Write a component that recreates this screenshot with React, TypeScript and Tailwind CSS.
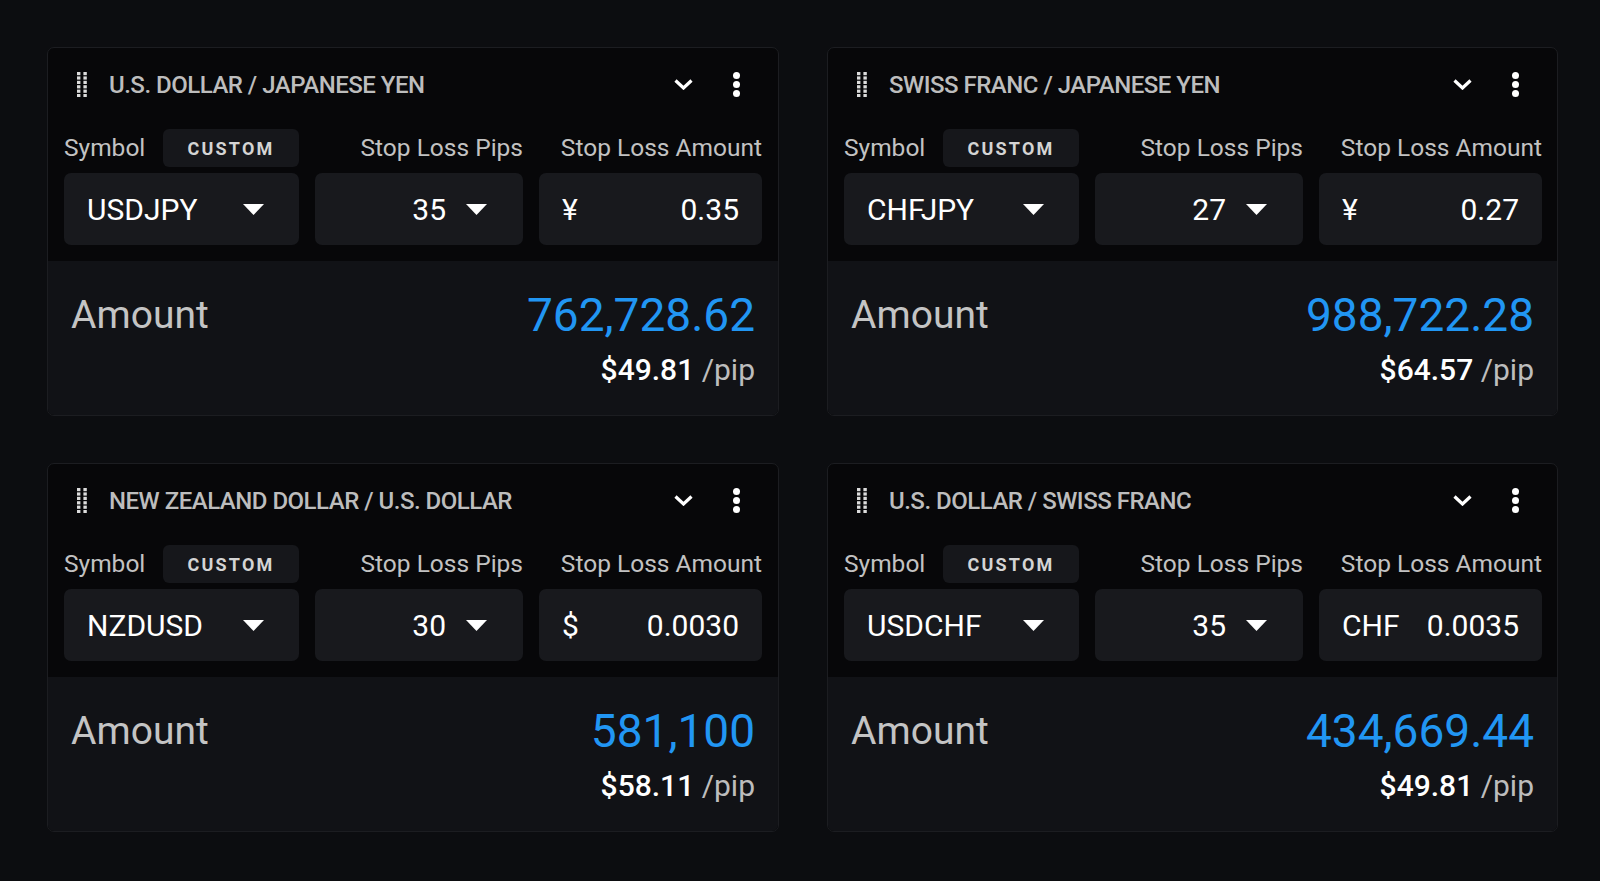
type Pair = {
  title: string;
  symbol: string;
  pips: string;
  currency: string;
  stopAmount: string;
  amount: string;
  perPip: string;
};

const PAIRS: Pair[] = [
  { title: 'U.S. DOLLAR / JAPANESE YEN', symbol: 'USDJPY', pips: '35', currency: '¥', stopAmount: '0.35', amount: '762,728.62', perPip: '$49.81' },
  { title: 'SWISS FRANC / JAPANESE YEN', symbol: 'CHFJPY', pips: '27', currency: '¥', stopAmount: '0.27', amount: '988,722.28', perPip: '$64.57' },
  { title: 'NEW ZEALAND DOLLAR / U.S. DOLLAR', symbol: 'NZDUSD', pips: '30', currency: '$', stopAmount: '0.0030', amount: '581,100', perPip: '$58.11' },
  { title: 'U.S. DOLLAR / SWISS FRANC', symbol: 'USDCHF', pips: '35', currency: 'CHF', stopAmount: '0.0035', amount: '434,669.44', perPip: '$49.81' },
];

function DragHandle() {
  const rows = [0, 1, 2, 3, 4, 5];
  return (
    <svg width="10" height="25" viewBox="0 0 10 25" className="shrink-0">
      {rows.map((r) => (
        <g key={r} fill="#dcdcdc">
          <rect x="0" y={r * 4.4} width="3.4" height="3.2" />
          <rect x="6.4" y={r * 4.4} width="3.4" height="3.2" />
        </g>
      ))}
    </svg>
  );
}

function Caret() {
  return (
    <svg width="21" height="11" viewBox="0 0 21 11" className="shrink-0">
      <polygon points="0,0 21,0 10.5,11" fill="#ffffff" />
    </svg>
  );
}

function Card({ p }: { p: Pair }) {
  return (
    <div className="h-[369px] flex flex-col rounded-[7px] border border-[#1c1d21] bg-[#070709] overflow-hidden">
      <div className="h-[73px] shrink-0 flex items-center pl-[29px] pr-[38px]">
        <DragHandle />
        <span className="ml-[22px] flex-1 text-[24px] font-medium tracking-[-0.5px] text-[#bdbdbd] leading-none">
          {p.title}
        </span>
        <svg width="19" height="11" viewBox="0 0 19 11" className="shrink-0">
          <polyline points="1.5,1.5 9.5,9 17.5,1.5" fill="none" stroke="#ffffff" strokeWidth="3.2" />
        </svg>
        <div className="ml-[40px] flex flex-col gap-[2px]">
          <span className="w-[7px] h-[7px] rounded-full bg-white" />
          <span className="w-[7px] h-[7px] rounded-full bg-white" />
          <span className="w-[7px] h-[7px] rounded-full bg-white" />
        </div>
      </div>

      <div className="px-[16px] pt-[8px] pb-[16px] grid grid-cols-[235px_208px_223px] gap-x-[16px] gap-y-[6px]">
        <div className="h-[38px] flex items-center justify-between">
          <span className="text-[24.5px] text-[#c2c2c2]">Symbol</span>
          <span className="w-[136px] h-[38px] rounded-[6px] bg-[#16171b] flex items-center justify-center text-[18px] font-bold tracking-[0.12em] text-[#d4d4d4]">
            CUSTOM
          </span>
        </div>
        <div className="h-[38px] flex items-center justify-end">
          <span className="text-[24.5px] text-[#c2c2c2] whitespace-nowrap">Stop Loss Pips</span>
        </div>
        <div className="h-[38px] flex items-center justify-end">
          <span className="text-[24.5px] text-[#c2c2c2] whitespace-nowrap">Stop Loss Amount</span>
        </div>

        <div className="h-[72px] rounded-[7px] bg-[#18191d] flex items-center justify-between pl-[23px] pr-[35px]">
          <span className="text-[30px] text-white">{p.symbol}</span>
          <Caret />
        </div>
        <div className="h-[72px] rounded-[7px] bg-[#18191d] flex items-center justify-end gap-[20px] pr-[36px]">
          <span className="text-[30px] text-white">{p.pips}</span>
          <Caret />
        </div>
        <div className="h-[72px] rounded-[7px] bg-[#18191d] flex items-center justify-between px-[23px]">
          <span className="text-[30px] text-white">{p.currency}</span>
          <span className="text-[30px] text-white">{p.stopAmount}</span>
        </div>
      </div>

      <div className="flex-1 bg-[#111216] px-[23px] pt-[31px]">
        <div className="h-[46px] flex items-center justify-between">
          <span className="text-[39px] text-[#c4c4c4] leading-none">Amount</span>
          <span className="text-[46px] text-[#2196f3] leading-none">{p.amount}</span>
        </div>
        <div className="mt-[17px] text-right text-[30px] leading-[30px]">
          <span className="font-medium text-white">{p.perPip}</span>
          <span className="text-[#bdbdbd]"> /pip</span>
        </div>
      </div>
    </div>
  );
}

export default function App() {
  return (
    <div className="w-[1600px] h-[881px] bg-[#0c0d10] pt-[47px] pl-[47px] font-['Roboto',sans-serif] overflow-hidden">
      <div className="grid grid-cols-[732px_731px] gap-x-[48px] gap-y-[47px]">
        {PAIRS.map((p) => (
          <Card key={p.title} p={p} />
        ))}
      </div>
    </div>
  );
}
